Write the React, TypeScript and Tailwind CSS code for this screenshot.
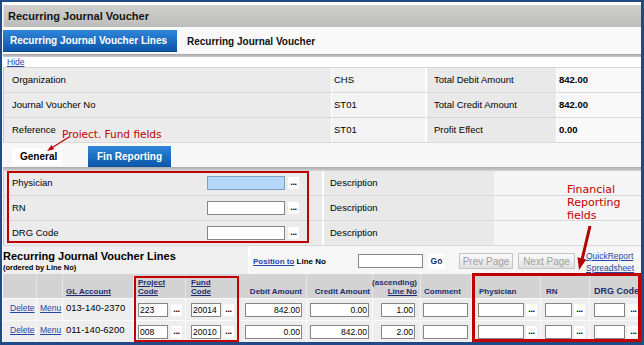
import React from "react";

const infoRows = [
  ["Organization", "CHS", "Total Debit Amount", "842.00"],
  ["Journal Voucher No", "ST01", "Total Credit Amount", "842.00"],
  ["Reference", "ST01", "Profit Effect", "0.00"],
];

const lines = [
  { gl: "013-140-2370", project: "223", fund: "20014", debit: "842.00", credit: "0.00", line: "1.00" },
  { gl: "011-140-6200", project: "008", fund: "20010", debit: "0.00", credit: "842.00", line: "2.00" },
];

function Dots({ w = "w-[11px]" }: { w?: string }) {
  return (
    <span className={`flex h-[12px] shrink-0 items-end justify-center bg-white pb-[2px] text-[9px] font-bold leading-none tracking-[-0.3px] text-black ${w}`}>
      ...
    </span>
  );
}

function Field({
  w,
  value = "",
  right = false,
  focus = false,
  extra = "",
}: {
  w: string;
  value?: string;
  right?: boolean;
  focus?: boolean;
  extra?: string;
}) {
  return (
    <input
      readOnly
      value={value}
      className={`h-[14px] shrink-0 border px-[1px] text-[8.5px] leading-none text-black outline-none ${w} ${extra} ${right ? "text-right" : "text-left"} ${
        focus ? "border-[#7f9fc4] bg-[#b4d7fa]" : "border-[#858585] bg-white"
      }`}
    />
  );
}

function Link({ children }: { children: React.ReactNode }) {
  return <span className="text-[#2347a6] underline">{children}</span>;
}

export default function App() {
  return (
    <div className="relative h-[345px] w-[644px] overflow-hidden border-t-2 border-r-[3px] border-b-[3px] border-l-2 border-[#1f4a86] bg-white pt-[3px] pl-px font-['Liberation_Sans',Arial,sans-serif] text-black">
      {/* Title */}
      <div className="flex h-[22px] items-center border-l border-[#e2e2e2] bg-gradient-to-b from-[#cfcfcd] to-[#bdbebc] pl-[4px] text-[11px] font-bold text-[#141414]">
        Recurring Journal Voucher
      </div>

      {/* Main tabs */}
      <div className="flex h-[27px] items-start bg-[#f9f9f9] pt-[3px]">
        <div className="flex h-[22px] w-[174px] items-center border-b border-[#0a4586] bg-gradient-to-b from-[#2f86da] to-[#0b56a9] pl-[7px] text-[10px] font-bold text-white">
          Recurring Journal Voucher Lines
        </div>
        <div className="flex h-[22px] items-center pl-[10px] text-[10px] font-bold text-[#111]">Recurring Journal Voucher</div>
      </div>
      <div className="h-[3px] bg-gradient-to-b from-[#a2a2a2] to-[#cdcdcd]" />

      {/* Hide */}
      <div className="flex h-[11px] items-center border-b border-[#d4d4d4] pl-[4px] text-[8.5px] leading-none">
        <Link>Hide</Link>
      </div>

      {/* Header info */}
      {infoRows.map((r) => (
        <div key={r[0]} className="flex h-[25px] border-b border-[#d9d9d9] text-[9.5px]">
          <div className="flex w-[328px] items-center border-l border-[#c9c9c9] bg-[#ebebeb] pl-[8px]">{r[0]}</div>
          <div className="flex w-[94px] items-center border-l border-white bg-[#f3f3f3] pl-[2px]">{r[1]}</div>
          <div className="flex w-[131px] items-center border-l-2 border-white bg-[#e9e9e9] pl-[7px]">{r[2]}</div>
          <div className="flex w-[85px] items-center border-l border-white bg-[#f8f8f8] pl-[2px] font-bold">{r[3]}</div>
        </div>
      ))}

      {/* Sub tabs */}
      <div className="flex h-[24px] items-start bg-[#f7f7f7]">
        <div className="mt-[5px] ml-[9px] flex h-[17px] w-[50px] items-center bg-white pl-[8px] text-[10px] font-bold">General</div>
        <div className="mt-[3px] ml-[26px] flex h-[21px] w-[83px] items-center bg-gradient-to-b from-[#2f86da] to-[#0b56a9] pl-[9px] text-[10px] font-bold text-white">
          Fin Reporting
        </div>
      </div>
      <div className="h-[4px] bg-gradient-to-b from-[#a8a8a8] to-[#d6d6d6]" />

      {/* Fin reporting fields */}
      {["Physician", "RN", "DRG Code"].map((label, i) => (
        <div key={label} className="flex h-[25px] border-b border-[#d9d9d9] text-[9.5px]">
          <div className="flex w-[200px] items-center border-l border-[#c9c9c9] bg-[#ebebeb] pl-[8px]">{label}</div>
          <div className="flex w-[119px] items-center gap-[3px] bg-[#ebebeb] pl-[4px]">
            <Field w="w-[78px]" focus={i === 0} />
            <Dots />
          </div>
          <div className="flex w-[172px] items-center border-l-2 border-white bg-[#e9e9e9] pl-[6px]">Description</div>
          <div className="w-[147px] bg-[#f5f5f5]" />
        </div>
      ))}

      {/* Lines header */}
      <div className="flex h-[28px]">
        <div className="w-[245px] bg-[#efefef] pt-[4px]">
          <div className="text-[11px] leading-[13px] font-bold">Recurring Journal Voucher Lines</div>
          <div className="text-[7.5px] leading-[9px] font-bold">(ordered by Line No)</div>
        </div>
        <div className="flex flex-1 items-start border-l-2 border-white bg-[#f6f6f6] pl-[3px]">
          <span className="mt-[11px] w-[105px] text-[8px] leading-[10px] font-bold">
            <span className="text-[#2347a6] underline">Position to</span> Line No
          </span>
          <Field w="w-[65px]" extra="mt-[8px]" />
          <span className="mt-[8px] ml-[5px] flex h-[15px] w-[17px] items-center justify-center bg-white text-[8.5px] font-bold text-[#1d2d6f]">Go</span>
          <span className="mt-[7px] ml-[14px] flex h-[16px] w-[54px] items-center justify-center border border-[#c4c4c4] bg-gradient-to-b from-[#fbfbfb] to-[#e0e0e0] text-[10px] text-[#a0a0a0]">
            Prev Page
          </span>
          <span className="mt-[7px] ml-[5px] flex h-[16px] w-[57px] items-center justify-center border border-[#c4c4c4] bg-gradient-to-b from-[#fbfbfb] to-[#e0e0e0] text-[10px] text-[#a0a0a0]">
            Next Page
          </span>
          <span className="mt-[4px] ml-[11px] flex flex-col text-[8.5px] leading-[12px]">
            <Link>QuickReport</Link>
            <Link>Spreadsheet</Link>
          </span>
        </div>
      </div>

      {/* Lines table header */}
      <div className="flex h-[24px] bg-[#d3d3d3] text-[8px] leading-[9px] font-bold text-[#1d2d6f]">
        <div className="w-[34px] shrink-0 border-r border-[#e6e6e6]" />
        <div className="w-[26px] shrink-0 border-r border-[#e6e6e6]" />
        <div className="flex w-[71px] shrink-0 flex-col justify-end border-r border-[#e6e6e6] pb-[2px] pl-[3px]">
          <span className="underline">GL Account</span>
        </div>
        <div className="flex w-[52px] shrink-0 flex-col justify-end border-r border-[#e6e6e6] pb-[2px] pl-[4px]">
          <span className="underline">Project</span>
          <span className="underline">Code</span>
        </div>
        <div className="flex w-[52px] shrink-0 flex-col justify-end border-r border-[#e6e6e6] pb-[2px] pl-[5px]">
          <span className="underline">Fund</span>
          <span className="underline">Code</span>
        </div>
        <div className="flex w-[69px] shrink-0 flex-col items-end justify-end border-r border-[#e6e6e6] pr-[4px] pb-[2px]">Debit Amount</div>
        <div className="flex w-[66px] shrink-0 flex-col items-end justify-end border-r border-[#e6e6e6] pr-[2px] pb-[2px]">Credit Amount</div>
        <div className="flex w-[48px] shrink-0 flex-col items-end justify-end border-r border-[#e6e6e6] pr-[3px] pb-[2px]">
          <span>(ascending)</span>
          <span className="underline">Line No</span>
        </div>
        <div className="flex w-[51px] shrink-0 flex-col justify-end border-r border-[#e6e6e6] pb-[2px] pl-[3px]">Comment</div>
        <div className="flex w-[69px] shrink-0 flex-col justify-end border-r border-[#e6e6e6] pb-[2px] pl-[7px]">Physician</div>
        <div className="flex w-[49px] shrink-0 flex-col justify-end border-r border-[#e6e6e6] pb-[2px] pl-[5px]">RN</div>
        <div className="flex w-[60px] shrink-0 flex-col justify-end pb-[2px] pl-[4px] text-[9px] whitespace-nowrap">DRG Code</div>
      </div>

      {/* Lines rows */}
      {lines.map((l) => (
        <div key={l.gl} className="flex h-[22px] border-t border-[#fafafa] bg-[#eeeeee]">
          <div className="w-[34px] shrink-0 border-r border-[#fafafa] pt-[3px] pl-[7px] text-[8.5px] leading-[12px]">
            <Link>Delete</Link>
          </div>
          <div className="w-[26px] shrink-0 border-r border-[#fafafa] pt-[3px] pl-[3px] text-[8.5px] leading-[12px]">
            <Link>Menu</Link>
          </div>
          <div className="w-[71px] shrink-0 border-r border-[#fafafa] pt-[3px] pl-[3px] text-[9.5px] leading-[12px]">{l.gl}</div>
          <div className="flex w-[52px] shrink-0 items-center gap-[3px] border-r border-[#fafafa] pl-[4px]">
            <Field w="w-[30px]" value={l.project} />
            <Dots />
          </div>
          <div className="flex w-[52px] shrink-0 items-center gap-[2px] border-r border-[#fafafa] pl-[5px]">
            <Field w="w-[30px]" value={l.fund} />
            <Dots />
          </div>
          <div className="flex w-[69px] shrink-0 items-center border-r border-[#fafafa] pl-[7px]">
            <Field w="w-[57px]" value={l.debit} right />
          </div>
          <div className="flex w-[66px] shrink-0 items-center border-r border-[#fafafa] pl-[3px]">
            <Field w="w-[59px]" value={l.credit} right />
          </div>
          <div className="flex w-[48px] shrink-0 items-center border-r border-[#fafafa] pl-[8px]">
            <Field w="w-[34px]" value={l.line} right />
          </div>
          <div className="flex w-[51px] shrink-0 items-center border-r border-[#fafafa] pl-[2px]">
            <Field w="w-[45px]" />
          </div>
          <div className="flex w-[69px] shrink-0 items-center gap-[2px] border-r border-[#fafafa] pl-[6px]">
            <Field w="w-[46px]" />
            <Dots />
          </div>
          <div className="flex w-[49px] shrink-0 items-center gap-[2px] border-r border-[#fafafa] pl-[4px]">
            <Field w="w-[27px]" />
            <Dots />
          </div>
          <div className="flex w-[60px] shrink-0 items-center gap-[2px] pl-[4px]">
            <Field w="w-[31px]" />
            <Dots w="w-[13px]" />
          </div>
        </div>
      ))}

      {/* Annotations */}
      <div className="pointer-events-none absolute top-[169px] left-[5px] h-[72px] w-[302px] border-2 border-[#c00000]" />
      <div className="pointer-events-none absolute top-[274px] left-[132px] h-[66px] w-[105px] border-2 border-[#c00000]" />
      <div className="pointer-events-none absolute top-[271px] left-[470px] h-[69px] w-[169px] border-[3px] border-[#c00000]" />

      <div className="absolute top-[126px] left-[60px] font-['DejaVu_Sans',sans-serif] text-[10.5px] leading-[12px] text-[#c00000]">
        Proiect. Fund fields
      </div>
      <svg className="absolute top-[128px] left-[38px]" width="35" height="25" viewBox="0 0 35 25">
        <line x1="29" y1="7" x2="12" y2="17.8" stroke="#c00000" strokeWidth="1.2" />
        <polygon points="7,21 14.2,19.3 11.6,15.1" fill="#c00000" />
      </svg>

      <div className="absolute top-[181px] left-[565px] font-['DejaVu_Sans',sans-serif] text-[11px] leading-[13px] text-[#c00000]">
        Financial
        <br />
        Reporting
        <br />
        fields
      </div>
      <svg className="absolute top-[220px] left-[568px]" width="25" height="52" viewBox="0 0 25 52">
        <line x1="20" y1="4" x2="12.2" y2="37" stroke="#b30000" strokeWidth="3" />
        <polygon points="9,48 16.3,37.5 7.5,35.3" fill="#b30000" />
      </svg>
    </div>
  );
}
